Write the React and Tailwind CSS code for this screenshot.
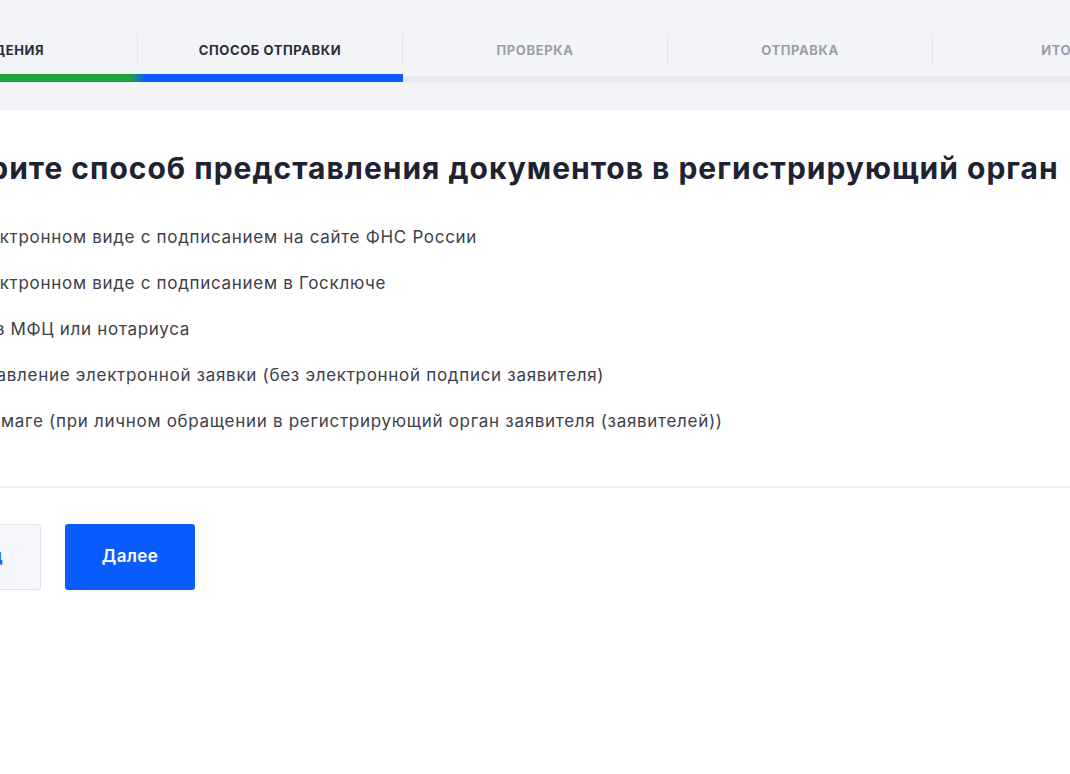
import React from "react";

const steps = ["Сведения", "Способ отправки", "Проверка", "Отправка", "Итоги"];

const options = [
  "В электронном виде с подписанием на сайте ФНС России",
  "В электронном виде с подписанием в Госключе",
  "Через МФЦ или нотариуса",
  "Направление электронной заявки (без электронной подписи заявителя)",
  "На бумаге (при личном обращении в регистрирующий орган заявителя (заявителей))",
];

function StepBar({ index }) {
  if (index === 0) return <div className="h-[8px] bg-[#1ea23a]" />;
  if (index === 1)
    return (
      <div className="h-[8px] ml-[-8px] bg-[linear-gradient(90deg,#1ea23a_0px,#0b5cff_16px)]" />
    );
  return (
    <div className="h-[8px] flex items-center">
      <div className="h-[5px] w-full bg-[#e7e9ee] shadow-[0_2px_3px_rgba(0,0,0,0.04)]" />
    </div>
  );
}

export default function App() {
  const current = 1;

  return (
    <div
      className="w-[1070px] h-[774px] overflow-hidden bg-white"
      style={{ fontFamily: "Inter, 'Noto Sans', sans-serif" }}
    >
      <div className="h-[110px] bg-[#f3f4f8] pt-[34px]">
        <div className="flex ml-[-127px]">
          {steps.map((s, i) => (
            <div key={s} className="w-[265px] shrink-0 flex flex-col">
              <div
                className={
                  "h-[31px] flex items-center justify-center pt-[2px] " +
                  (i < steps.length - 1 ? "border-r border-[#e3e5ea]" : "")
                }
              >
                <span
                  className={
                    "text-[13px] font-bold uppercase tracking-[0.6px] " +
                    (i <= current ? "text-[#2a2d38]" : "text-[#9a9ea8]")
                  }
                >
                  {s}
                </span>
              </div>
              <div className="mt-[9px]">
                <StepBar index={i} />
              </div>
            </div>
          ))}
        </div>
      </div>

      <div className="pt-[40px]">
        <h1 className="ml-[-95px] text-[30px] leading-[36px] font-bold text-[#1f2232] tracking-[1px] whitespace-nowrap">
          Выберите способ представления документов в регистрирующий орган
        </h1>

        <div className="ml-[-77px] mt-[29px] flex flex-col">
          {options.map((o) => (
            <label
              key={o}
              className="h-[46px] flex items-center gap-[10px] whitespace-nowrap"
            >
              <span className="w-[18px] h-[18px] rounded-full border-2 border-[#c3c7d0] shrink-0" />
              <span className="text-[17px] text-[#3d404a] tracking-[0.7px]">{o}</span>
            </label>
          ))}
        </div>
      </div>

      <div className="mt-[41px] h-[2px] bg-[#eceef2]" />

      <div className="ml-[-89px] mt-[36px] flex gap-[24px]">
        <button className="w-[130px] h-[66px] rounded-[3px] bg-[#f5f7fa] border border-[#e1e4ea] text-[#0b5cff] text-[17px] font-semibold tracking-[0.4px]">
          Назад
        </button>
        <button className="w-[130px] h-[66px] rounded-[3px] bg-[#0b5cff] text-white text-[17px] font-semibold tracking-[0.4px]">
          Далее
        </button>
      </div>
    </div>
  );
}
